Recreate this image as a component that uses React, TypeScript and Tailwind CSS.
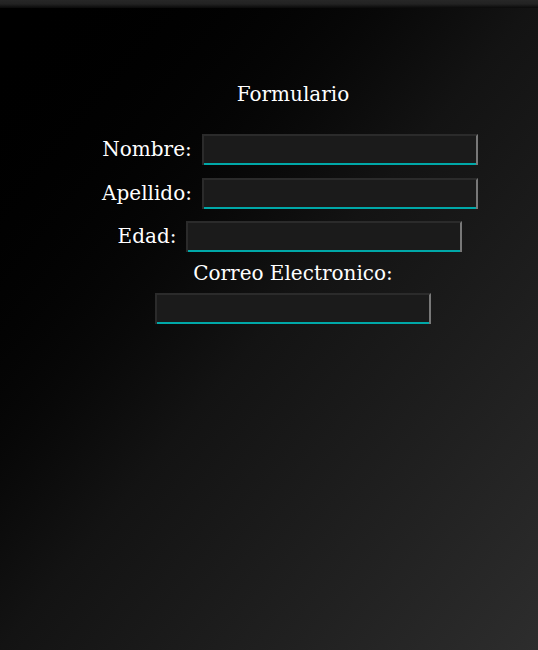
const fieldClass =
  "block h-[31px] w-[276px] shrink-0 bg-[#1b1b1b] border-t-2 border-l-2 border-r-2 border-b-0 border-t-[#2b2b2b] border-l-[#2b2b2b] border-r-[#787878] shadow-[inset_0_-2px_0_#00a8a8] outline-none text-white px-1";

function Field({ label, id, className = "" }: { label: string; id: string; className?: string }) {
  return (
    <div className={`flex items-center justify-center gap-[10px] pr-[6px] ${className}`}>
      <label htmlFor={id} className="leading-[31px]">
        {label}
      </label>
      <input id={id} type="text" className={fieldClass} />
    </div>
  );
}

export default function App() {
  return (
    <div
      className="min-h-[650px] w-full bg-gradient-to-br from-[#000000] via-[#131313] to-[#2d2d2d] text-white"
      style={{ fontFamily: '"DejaVu Serif", "Liberation Serif", serif' }}
    >
      <div className="h-[8px] bg-gradient-to-b from-[#272727] via-[#222222] to-[#0a0a0a]" />
      <div className="pl-[48px]">
        <form className="mx-auto flex w-[420px] flex-col pt-[71px] text-center text-[20px]">
          <h1 className="mb-[25px] text-[20px] leading-[30px]">Formulario</h1>
          <Field label="Nombre:" id="nombre" />
          <Field label="Apellido:" id="apellido" className="mt-[13px]" />
          <Field label="Edad:" id="edad" className="mt-[12px]" />
          <label htmlFor="correo" className="mt-[7px] block leading-[28px]">
            Correo Electronico:
          </label>
          <div className="mt-[6px] flex justify-center">
            <input id="correo" type="email" className={fieldClass} />
          </div>
        </form>
      </div>
    </div>
  );
}
